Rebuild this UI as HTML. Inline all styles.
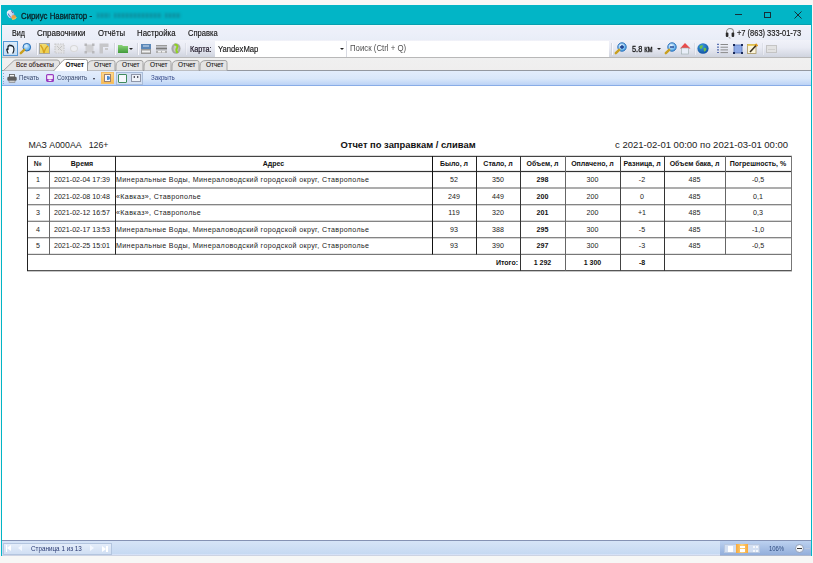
<!DOCTYPE html>
<html><head><meta charset="utf-8">
<style>
*{box-sizing:border-box;margin:0;padding:0}
html,body{width:813px;height:563px;overflow:hidden;background:#f7f7f6;font-family:"Liberation Sans",sans-serif;position:relative}
.a{position:absolute}
#win{position:absolute;left:1px;top:5px;width:811px;height:551px;background:#02b5c6;}
#menu{position:absolute;left:2px;top:25px;width:809px;height:15px;background:linear-gradient(#f4fafc 0,#eef0f9 12%,#eceff9 60%,#e9edf7 100%);}
#tb{position:absolute;left:2px;top:40px;width:809px;height:17px;background:linear-gradient(#f1f2f9,#e9ebf4 45%,#d0d4df);}
#tabs{position:absolute;left:2px;top:57px;width:809px;height:14px;background:linear-gradient(#f0f0f0,#efeeee);border-top:1px solid #b8b8b8;border-bottom:1px solid #9498a0}
#tb2{position:absolute;left:2px;top:71px;width:809px;height:15px;background:linear-gradient(#e3edfc 0%,#d9e7fa 55%,#bcd3f6 100%);border-bottom:1px solid #88ace6}
#content{position:absolute;left:2px;top:86px;width:809px;height:454px;background:#fff;}
#status{position:absolute;left:2px;top:540px;width:809px;height:16px;background:linear-gradient(#d6e4f7,#c6d9f2 85%,#dce5fa 92%,#c2c6d2 100%);border-top:1px solid #8592b4}
.t{position:absolute;white-space:nowrap;line-height:1;color:#1e1e1e}
.m{font-size:8.6px;top:28.9px;color:#151515;-webkit-text-stroke:0.15px #151515;transform-origin:0 0}
.sep{position:absolute;top:43px;width:2px;height:12px;background:#d2d5de;border-right:1px solid #f8f8fc}
.tab{position:absolute;top:58px;height:12px}
.tabtxt{position:absolute;top:61.8px;font-size:6.4px;color:#1a1a1a;-webkit-text-stroke:0.12px #1a1a1a;white-space:nowrap;line-height:1}
.tbl{position:absolute;left:27px;top:156px;width:765px;height:115px}
.hl{position:absolute;height:1px;background:#3a3a3a}
.vl{position:absolute;width:1px;background:#111}
.c{position:absolute;font-size:7.1px;line-height:1;white-space:nowrap;color:#222;text-align:center}
.h{font-weight:bold;font-size:7px;color:#111}
.b{font-weight:bold;color:#111}
</style></head><body>
<div id="win"></div>
<!-- title -->
<svg class="a" style="left:6px;top:9px" width="12" height="12" viewBox="0 0 12 12"><defs><linearGradient id="ti" x1="0" y1="0" x2="1" y2="1"><stop offset="0" stop-color="#ffffff"/><stop offset="0.6" stop-color="#c8d8f0"/><stop offset="1" stop-color="#6a8ad0"/></linearGradient></defs><ellipse cx="4.6" cy="5" rx="3.4" ry="4.3" transform="rotate(-30 4.6 5)" fill="url(#ti)"/><path d="M2.2 4.5 Q3 7.5 5.2 8.5" stroke="#4a6ac8" stroke-width="1" fill="none"/><path d="M5 1.6 Q6.5 2.4 7 4" stroke="#2a4a90" stroke-width="0.9" fill="none"/><ellipse cx="7.8" cy="8.2" rx="2.4" ry="2.2" fill="#e8a048"/><path d="M6 10.3 Q8.5 10.5 10.5 8.5" stroke="#f3d25a" stroke-width="1" fill="none"/></svg>
<div class="t" style="left:20.6px;top:11.5px;font-size:8.5px;color:#0a2228;-webkit-text-stroke:0.3px #0a2228;transform:scaleX(0.92);transform-origin:0 0">Сириус Навигатор -</div>
<div class="a" style="left:96.5px;top:12.8px;width:13px;height:5.5px;background:repeating-linear-gradient(90deg,rgba(25,100,115,.45) 0,rgba(25,100,115,.45) 2.5px,rgba(25,100,115,.15) 2.5px,rgba(25,100,115,.15) 4px);filter:blur(0.9px)"></div>
<div class="a" style="left:113.5px;top:12.8px;width:48px;height:5.5px;background:repeating-linear-gradient(90deg,rgba(25,100,115,.45) 0,rgba(25,100,115,.45) 2.5px,rgba(25,100,115,.15) 2.5px,rgba(25,100,115,.15) 4px);filter:blur(0.9px)"></div>
<div class="a" style="left:165px;top:12.8px;width:16px;height:5.5px;background:repeating-linear-gradient(90deg,rgba(25,100,115,.45) 0,rgba(25,100,115,.45) 2.5px,rgba(25,100,115,.15) 2.5px,rgba(25,100,115,.15) 4px);filter:blur(0.9px)"></div>
<div class="a" style="left:735px;top:14px;width:7px;height:1px;background:#15303a"></div>
<div class="a" style="left:764px;top:12px;width:7px;height:6px;border:1px solid #15303a"></div>
<svg class="a" style="left:794px;top:11px" width="8" height="8" viewBox="0 0 8 8"><path d="M0.5 0.5L7.5 7.5M7.5 0.5L0.5 7.5" stroke="#15303a" stroke-width="1"/></svg>
<!-- menu -->
<div class="a" style="left:2px;top:24px;width:809px;height:1px;background:#079fae"></div>
<div id="menu"></div>
<div class="t m" style="left:11.9px;transform:scaleX(0.84)">Вид</div>
<div class="t m" style="left:36.8px;transform:scaleX(0.93)">Справочники</div>
<div class="t m" style="left:98px;transform:scaleX(0.9)">Отчёты</div>
<div class="t m" style="left:137px;transform:scaleX(0.91)">Настройка</div>
<div class="t m" style="left:188px;transform:scaleX(0.88)">Справка</div>
<svg class="a" style="left:725px;top:27px" width="10" height="12" viewBox="0 0 10 12"><path d="M1.5 6.5 V5 A3.5 3.5 0 0 1 8.5 5 V6.5" fill="none" stroke="#8a8a8a" stroke-width="1.1"/><rect x="0.8" y="5.5" width="2.6" height="4.5" rx="1" fill="#2a2a2a"/><rect x="6.6" y="5.5" width="2.6" height="4.5" rx="1" fill="#2a2a2a"/><path d="M4 10 Q4 11.5 5.5 11.2" stroke="#999" stroke-width="0.9" fill="none"/></svg>
<div class="t m" style="left:737px;font-size:8.3px;top:29.2px;transform:scaleX(0.9)">+7 (863) 333-01-73</div>
<!-- toolbar -->
<div id="tb"></div>
<div class="a" style="left:3px;top:41px;width:15px;height:15px;background:linear-gradient(#dcebf9,#c3dcf4);border:1px solid #5596d4"></div>
<svg class="a" style="left:6px;top:44px" width="9" height="10" viewBox="0 0 9 10"><path d="M2.2 9.5 Q1.2 7.5 0.8 5.8 Q0.6 4.8 1.6 5 L2 5.6 V2.4 Q2.3 1.6 3 2.2 V1.5 Q3.5 0.6 4.3 1.3 L4.6 1.8 Q5.3 1 6 1.8 V2.3 Q6.8 1.9 7.3 2.8 Q8.2 4.5 7.8 6.5 Q7.4 8.5 6.6 9.5" fill="#f2f7fc" stroke="#1a222c" stroke-width="1.2" stroke-linejoin="round"/></svg>
<svg class="a" style="left:19px;top:42px" width="13" height="13" viewBox="0 0 13 13"><defs><radialGradient id="lg" cx="0.4" cy="0.35" r="0.7"><stop offset="0" stop-color="#e8f6ff"/><stop offset="1" stop-color="#3c9be6"/></radialGradient></defs><circle cx="7.8" cy="5.2" r="3.8" fill="url(#lg)" stroke="#2a6fb8" stroke-width="1"/><path d="M5.2 7.8 L1.8 11.2" stroke="#c9a020" stroke-width="2.4" stroke-linecap="round"/></svg>
<div class="sep" style="left:36px"></div>
<svg class="a" style="left:39px;top:43px" width="11" height="11" viewBox="0 0 11 11"><defs><linearGradient id="yg" x1="0" y1="0" x2="1" y2="1"><stop offset="0" stop-color="#f3e27a"/><stop offset="1" stop-color="#e9c94a"/></linearGradient></defs><rect x="0.5" y="0.5" width="10" height="10" fill="url(#yg)" stroke="#a8a8a0" stroke-width="1"/><path d="M7 1 L10 1 L10 4 Z" fill="#7fb0e0"/><path d="M1.5 2 Q4 5 5 10 M9 3 Q6 5 5 10" stroke="#d6a21c" stroke-width="1.4" fill="none"/></svg>
<svg class="a" style="left:54px;top:43px" width="11" height="11" viewBox="0 0 11 11"><rect x="1" y="1" width="9" height="9" fill="#e2e2e4" stroke="#c8c8ca" stroke-width="1.2" stroke-dasharray="1.5 1"/><path d="M3 3 L8 8 M8 3 L4 7" stroke="#c4c4c4" stroke-width="1"/></svg>
<div class="a" style="left:70px;top:45px;width:8px;height:7px;border-radius:50%;border:1.2px solid #d8d8d8;background:#eeeff3"></div>
<svg class="a" style="left:84px;top:43px" width="11" height="11" viewBox="0 0 11 11"><rect x="1.5" y="1.5" width="8" height="8" fill="#cfcfd2"/><rect x="0.5" y="0.5" width="2.5" height="2.5" fill="#b8b8bb"/><rect x="8" y="0.5" width="2.5" height="2.5" fill="#b8b8bb"/><rect x="0.5" y="8" width="2.5" height="2.5" fill="#b8b8bb"/><rect x="8" y="8" width="2.5" height="2.5" fill="#b8b8bb"/></svg>
<svg class="a" style="left:99px;top:43px" width="10" height="11" viewBox="0 0 10 11"><path d="M0.5 0.5 H9.5 V4 H4 V10.5 H0.5 Z" fill="#c6c6c9"/><rect x="6" y="5" width="3" height="2" fill="#c8c8ca"/></svg>
<div class="sep" style="left:114px"></div>
<svg class="a" style="left:118px;top:44px" width="10" height="9" viewBox="0 0 10 9"><defs><linearGradient id="gf" x1="0" y1="0" x2="0" y2="1"><stop offset="0" stop-color="#8ed47a"/><stop offset="1" stop-color="#3f9a3a"/></linearGradient></defs><path d="M0 1 H4 L5 2 H10 V9 H0 Z" fill="url(#gf)"/></svg>
<div class="a" style="left:129px;top:48px;width:0;height:0;border-left:2px solid transparent;border-right:2px solid transparent;border-top:2.5px solid #222"></div>
<div class="sep" style="left:137px"></div>
<svg class="a" style="left:141px;top:44px" width="10" height="10" viewBox="0 0 10 10"><rect x="0" y="0" width="10" height="5" fill="#5b87b8"/><rect x="2" y="1.5" width="6" height="1" fill="#d8e6f4"/><rect x="0" y="5" width="10" height="5" fill="#9a9a9a"/><rect x="1" y="6.5" width="8" height="2" fill="#f0f0f0"/></svg>
<svg class="a" style="left:156px;top:45px" width="11" height="8" viewBox="0 0 11 8"><rect x="0" y="0" width="11" height="1.5" fill="#9a9a9a"/><rect x="0" y="2.5" width="11" height="2" fill="#7a7a7a"/><rect x="0" y="5.5" width="11" height="2.5" fill="#b0b0b0"/><rect x="2" y="6" width="3" height="1.5" fill="#eee"/><rect x="6" y="6" width="3" height="1.5" fill="#eee"/></svg>
<svg class="a" style="left:171px;top:43px" width="10" height="11" viewBox="0 0 10 11"><ellipse cx="5" cy="5.5" rx="4.6" ry="5.2" fill="#a6a6a6"/><ellipse cx="5" cy="5.5" rx="2.5" ry="3.5" fill="#c8c8c8"/><path d="M3.5 1.5 Q7.5 2 6 5 Q4.5 7 6.5 10" stroke="#8ed31f" stroke-width="2" fill="none"/></svg>
<div class="sep" style="left:185px;opacity:.5"></div>
<div class="t" style="left:189.6px;top:44.6px;font-size:8.5px;color:#201828;-webkit-text-stroke:0.2px #201828;transform:scaleX(0.86);transform-origin:0 0">Карта:</div>
<div class="a" style="left:215px;top:40.5px;width:131px;height:16.3px;background:#fff"></div>
<div class="t" style="left:217.8px;top:44.6px;font-size:8.5px;color:#161616;-webkit-text-stroke:0.15px #161616;transform:scaleX(0.9);transform-origin:0 0">YandexMap</div>
<div class="a" style="left:340px;top:48px;width:0;height:0;border-left:2px solid transparent;border-right:2px solid transparent;border-top:2px solid #222"></div>
<div class="a" style="left:346px;top:40.5px;width:263px;height:16.3px;background:#fff;border-left:1px solid #d8dae2"></div>
<div class="t" style="left:349.6px;top:44.2px;font-size:8.6px;color:#505050;transform:scaleX(0.91);transform-origin:0 0">Поиск (Ctrl + Q)</div>
<div class="sep" style="left:611px"></div>
<svg class="a" style="left:614px;top:42px" width="13" height="13" viewBox="0 0 13 13"><defs><radialGradient id="lz" cx="0.4" cy="0.35" r="0.7"><stop offset="0" stop-color="#e8f6ff"/><stop offset="1" stop-color="#3c9be6"/></radialGradient></defs><circle cx="8" cy="5" r="4.2" fill="url(#lz)" stroke="#2a6fb8" stroke-width="1"/><path d="M6 5 H10 M8 3 V7" stroke="#163a8a" stroke-width="1.3"/><path d="M5.2 7.8 L1.8 11.2" stroke="#c9a020" stroke-width="2.4" stroke-linecap="round"/></svg>
<div class="t" style="left:631.5px;top:44.8px;font-size:9px;color:#1a1a1a;-webkit-text-stroke:0.3px #1a1a1a;transform:scaleX(0.82);transform-origin:0 0">5.8 км</div>
<div class="a" style="left:657px;top:48px;width:0;height:0;border-left:2px solid transparent;border-right:2px solid transparent;border-top:2px solid #222"></div>
<svg class="a" style="left:664px;top:42px" width="13" height="13" viewBox="0 0 13 13"><defs><radialGradient id="lz2" cx="0.4" cy="0.35" r="0.7"><stop offset="0" stop-color="#e8f6ff"/><stop offset="1" stop-color="#3c9be6"/></radialGradient></defs><circle cx="8" cy="5" r="4.2" fill="url(#lz2)" stroke="#2a6fb8" stroke-width="1"/><path d="M6 5 H10" stroke="#163a8a" stroke-width="1.3"/><path d="M5.2 7.8 L1.8 11.2" stroke="#c9a020" stroke-width="2.4" stroke-linecap="round"/></svg>
<svg class="a" style="left:679px;top:42px" width="12" height="13" viewBox="0 0 12 13"><path d="M6 1 L11.5 6.5 H1 Z" fill="#e94c4c"/><rect x="2.5" y="6" width="7" height="6" fill="#e8eef8" stroke="#9aa" stroke-width="0.6"/></svg>
<div class="sep" style="left:694px;opacity:.6"></div>
<svg class="a" style="left:697px;top:43px" width="12" height="11" viewBox="0 0 12 11"><defs><radialGradient id="gl" cx="0.4" cy="0.3" r="0.8"><stop offset="0" stop-color="#3a9ae0"/><stop offset="1" stop-color="#0d4a9a"/></radialGradient></defs><ellipse cx="6" cy="5.5" rx="5.6" ry="5.3" fill="url(#gl)"/><path d="M2.5 3.5 Q4 1.5 6 2.5 Q5.5 5 4 6 Q2.5 5.5 2.5 3.5 Z M6.5 5 Q8.5 4 9.5 6 Q8.5 9 7 8.5 Z" fill="#6cc04a"/></svg>
<svg class="a" style="left:717px;top:43px" width="11" height="11" viewBox="0 0 11 11"><path d="M3.5 1.5H11M3.5 4.2H11M3.5 6.9H11M3.5 9.6H11" stroke="#8a8a8a" stroke-width="1"/><path d="M1 0.8V10.5" stroke="#2c4a9c" stroke-width="1.5" stroke-dasharray="1.2 1.5"/></svg>
<svg class="a" style="left:733px;top:44px" width="10" height="10" viewBox="0 0 10 10"><rect x="1" y="1" width="8" height="8" fill="#8eaae6" stroke="#5a78b8" stroke-width="0.8"/><rect x="0" y="0" width="2" height="2" fill="#1a2a5a"/><rect x="8" y="0" width="2" height="2" fill="#1a2a5a"/><rect x="0" y="8" width="2" height="2" fill="#1a2a5a"/><rect x="8" y="8" width="2" height="2" fill="#1a2a5a"/></svg>
<svg class="a" style="left:747px;top:43px" width="11" height="11" viewBox="0 0 11 11"><rect x="0.5" y="1.5" width="8.5" height="9" fill="#fbf5dc" stroke="#a89560" stroke-width="0.8"/><rect x="0.5" y="1.2" width="8.5" height="1.6" fill="#e5c54a"/><path d="M3 9 L9.5 2" stroke="#3a3020" stroke-width="1.6"/><path d="M8.5 1 L10.5 3" stroke="#e09a20" stroke-width="1.8"/></svg>
<div class="sep" style="left:762px;opacity:.5"></div>
<div class="a" style="left:766px;top:45px;width:11px;height:8px;background:#e2e2e2;border:1px solid #c4c4c4"></div>
<div class="a" style="left:768px;top:47px;width:7px;height:3px;border-bottom:1px solid #cfcfcf"></div>
<!-- tabs -->
<div id="tabs"></div>
<svg class="a" style="left:0;top:0" width="240" height="72" viewBox="0 0 240 72"><path d="M3.5 70.5 L13.5 61 Q14.5 60 16 60 L57 60 Q59 60 59.5 62 L60 70.5" fill="#e4e4e4" stroke="#a0a0a0" stroke-width="1"/><path d="M87.5 70.5 V66 Q87.5 60.5 93.5 60.5 H113 Q115 60.5 115 62.5 V70.5" fill="#e4e4e4" stroke="#a2a2a2" stroke-width="1"/><path d="M116 70.5 V66 Q116 60.5 122 60.5 H141 Q143 60.5 143 62.5 V70.5" fill="#e4e4e4" stroke="#a2a2a2" stroke-width="1"/><path d="M144 70.5 V66 Q144 60.5 150 60.5 H169 Q171 60.5 171 62.5 V70.5" fill="#e4e4e4" stroke="#a2a2a2" stroke-width="1"/><path d="M172 70.5 V66 Q172 60.5 178 60.5 H197 Q199 60.5 199 62.5 V70.5" fill="#e4e4e4" stroke="#a2a2a2" stroke-width="1"/><path d="M200 70.5 V66 Q200 60.5 206 60.5 H225 Q227 60.5 227 62.5 V70.5" fill="#e4e4e4" stroke="#a2a2a2" stroke-width="1"/><path d="M53.5 71 L63 60.5 Q64 59.5 65.5 59.5 L85.5 59.5 Q87.5 59.5 87.5 61.5 L87.5 71" fill="#fff" stroke="#999" stroke-width="1"/></svg>
<div class="tabtxt" style="left:16px;color:#3a2020">Все объекты</div>
<div class="tabtxt" style="left:65.5px;font-weight:bold;color:#111;top:62.1px">Отчет</div>
<div class="tabtxt" style="left:94px">Отчет</div>
<div class="tabtxt" style="left:122px">Отчет</div>
<div class="tabtxt" style="left:150px">Отчет</div>
<div class="tabtxt" style="left:178px">Отчет</div>
<div class="tabtxt" style="left:206px">Отчет</div>
<!-- toolbar 2 -->
<div id="tb2"></div>
<div class="a" style="left:3px;top:73px;width:1px;height:11px;background:repeating-linear-gradient(#8da2c6 0,#8da2c6 1px,transparent 1px,transparent 2.5px)"></div>
<svg class="a" style="left:7px;top:74px" width="10" height="9" viewBox="0 0 10 9"><rect x="2.5" y="0.5" width="5" height="2.5" fill="#f4f4f4" stroke="#555" stroke-width="0.8"/><rect x="0.3" y="2.8" width="9.4" height="4" rx="1.2" fill="#5e5e5e"/><rect x="2" y="6.5" width="6" height="2" fill="#cfcfcf" stroke="#666" stroke-width="0.5"/></svg>
<div class="t" style="left:18.8px;top:75.1px;font-size:6.8px;color:#34446a;transform:scaleX(0.9);transform-origin:0 0">Печать</div>
<svg class="a" style="left:46px;top:74px" width="8" height="8" viewBox="0 0 8 8"><rect x="0.6" y="0.6" width="6.8" height="6.8" rx="1" fill="#f4eefa" stroke="#9a3cc0" stroke-width="1.2"/><rect x="1" y="5" width="6" height="2.4" fill="#9a3cc0"/><rect x="2.5" y="5.6" width="3" height="1.3" fill="#fff"/></svg>
<div class="t" style="left:57.2px;top:75.1px;font-size:6.8px;color:#34446a;transform:scaleX(0.89);transform-origin:0 0">Сохранить</div>
<div class="a" style="left:93px;top:77.5px;width:0;height:0;border-left:1.5px solid transparent;border-right:1.5px solid transparent;border-top:2px solid #223"></div>
<div class="a" style="left:101px;top:72px;width:13px;height:12px;background:linear-gradient(#fcd890,#f7bb55);border:1px solid #f5c068"></div>
<div class="a" style="left:104px;top:74px;width:7px;height:8px;background:#f8f8fb;border:1px solid #9a8070"></div>
<div class="a" style="left:107px;top:76px;width:3px;height:4px;background:#4a8ad0;border-radius:0 2px 2px 0"></div>
<div class="a" style="left:116px;top:72px;width:27px;height:13px;background:#d3e0f3;border:1px solid #a9bcd9"></div>
<div class="a" style="left:118px;top:74px;width:9px;height:9px;background:#f4f7fb;border:1px solid #3f8a5c;border-radius:1px"></div>
<div class="a" style="left:131px;top:74px;width:10px;height:8px;background:#eef2f8;border:1px solid #8f96a8"></div>
<div class="a" style="left:133px;top:76px;width:0;height:0;border-top:1.5px solid transparent;border-bottom:1.5px solid transparent;border-right:2px solid #223"></div>
<div class="a" style="left:137px;top:76px;width:0;height:0;border-top:1.5px solid transparent;border-bottom:1.5px solid transparent;border-left:2px solid #223"></div>
<div class="t" style="left:151px;top:75.1px;font-size:6.8px;color:#34488a;transform:scaleX(0.91);transform-origin:0 0">Закрыть</div>
<!-- content -->
<div id="content"></div>
<div class="t" style="left:28.5px;top:140.8px;font-size:8.8px;color:#222">МАЗ А000АА<span style="margin-left:7px">126+</span></div>
<div class="t" style="left:340.5px;top:140px;font-size:9.4px;font-weight:bold;color:#111">Отчет по заправкам / сливам</div>
<div class="t" style="left:615px;top:140px;font-size:9.5px;color:#222">с 2021-02-01 00:00 по 2021-03-01 00:00</div>
<div id="grid"><svg class="a" style="left:0;top:0" width="813" height="300" viewBox="0 0 813 300"><rect x="27" y="155.80" width="765" height="1.2" fill="#444"/><rect x="27" y="170.90" width="765" height="1.2" fill="#333"/><rect x="27" y="187.40" width="765" height="1.2" fill="#777"/><rect x="27" y="204.10" width="765" height="1.2" fill="#777"/><rect x="27" y="220.70" width="765" height="1.2" fill="#777"/><rect x="27" y="237.10" width="765" height="1.2" fill="#777"/><rect x="27" y="253.80" width="765" height="1.2" fill="#777"/><rect x="27" y="270.10" width="765" height="1.2" fill="#444"/><rect x="27" y="156" width="1" height="115.0" fill="#222"/><rect x="49" y="156" width="1" height="98.4" fill="#666"/><rect x="115" y="156" width="1" height="98.4" fill="#222"/><rect x="432" y="156" width="1" height="98.4" fill="#111"/><rect x="476" y="156" width="1" height="98.4" fill="#222"/><rect x="520" y="156" width="1" height="115.0" fill="#333"/><rect x="565" y="156" width="1" height="115.0" fill="#666"/><rect x="620" y="156" width="1" height="115.0" fill="#444"/><rect x="664" y="156" width="1" height="115.0" fill="#333"/><rect x="725" y="156" width="1" height="98.4" fill="#666"/><rect x="791" y="156" width="1" height="115.0" fill="#777"/></svg>
<div class="c h" style="left:27px;top:155.9px;width:22px;line-height:16px;">№</div>
<div class="c h" style="left:49px;top:155.9px;width:66px;line-height:16px;">Время</div>
<div class="c h" style="left:115px;top:155.9px;width:317px;line-height:16px;">Адрес</div>
<div class="c h" style="left:432px;top:155.9px;width:44px;line-height:16px;">Было, л</div>
<div class="c h" style="left:476px;top:155.9px;width:44px;line-height:16px;">Стало, л</div>
<div class="c h" style="left:520px;top:155.9px;width:45px;line-height:16px;">Объем, л</div>
<div class="c h" style="left:565px;top:155.9px;width:55px;line-height:16px;">Оплачено, л</div>
<div class="c h" style="left:620px;top:155.9px;width:44px;line-height:16px;">Разница, л</div>
<div class="c h" style="left:664px;top:155.9px;width:61px;line-height:16px;">Объем бака, л</div>
<div class="c h" style="left:725px;top:155.9px;width:66px;line-height:16px;">Погрешность, %</div>
<div class="c " style="left:27px;top:172.1px;width:22px;line-height:16px;">1</div>
<div class="c " style="left:49px;top:172.1px;width:66px;line-height:16px;">2021-02-04 17:39</div>
<div class="c " style="left:116px;top:172.1px;width:317px;text-align:left;line-height:16px;letter-spacing:0.37px">Минеральные Воды, Минераловодский городской округ, Ставрополье</div>
<div class="c " style="left:432px;top:172.1px;width:44px;line-height:16px;">52</div>
<div class="c " style="left:476px;top:172.1px;width:44px;line-height:16px;">350</div>
<div class="c b" style="left:520px;top:172.1px;width:45px;line-height:16px;">298</div>
<div class="c " style="left:565px;top:172.1px;width:55px;line-height:16px;">300</div>
<div class="c " style="left:620px;top:172.1px;width:44px;line-height:16px;">-2</div>
<div class="c " style="left:664px;top:172.1px;width:61px;line-height:16px;">485</div>
<div class="c " style="left:725px;top:172.1px;width:66px;line-height:16px;">-0,5</div>
<div class="c " style="left:27px;top:188.6px;width:22px;line-height:16px;">2</div>
<div class="c " style="left:49px;top:188.6px;width:66px;line-height:16px;">2021-02-08 10:48</div>
<div class="c " style="left:116px;top:188.6px;width:317px;text-align:left;line-height:16px;letter-spacing:0.37px">«Кавказ», Ставрополье</div>
<div class="c " style="left:432px;top:188.6px;width:44px;line-height:16px;">249</div>
<div class="c " style="left:476px;top:188.6px;width:44px;line-height:16px;">449</div>
<div class="c b" style="left:520px;top:188.6px;width:45px;line-height:16px;">200</div>
<div class="c " style="left:565px;top:188.6px;width:55px;line-height:16px;">200</div>
<div class="c " style="left:620px;top:188.6px;width:44px;line-height:16px;">0</div>
<div class="c " style="left:664px;top:188.6px;width:61px;line-height:16px;">485</div>
<div class="c " style="left:725px;top:188.6px;width:66px;line-height:16px;">0,1</div>
<div class="c " style="left:27px;top:205.3px;width:22px;line-height:16px;">3</div>
<div class="c " style="left:49px;top:205.3px;width:66px;line-height:16px;">2021-02-12 16:57</div>
<div class="c " style="left:116px;top:205.3px;width:317px;text-align:left;line-height:16px;letter-spacing:0.37px">«Кавказ», Ставрополье</div>
<div class="c " style="left:432px;top:205.3px;width:44px;line-height:16px;">119</div>
<div class="c " style="left:476px;top:205.3px;width:44px;line-height:16px;">320</div>
<div class="c b" style="left:520px;top:205.3px;width:45px;line-height:16px;">201</div>
<div class="c " style="left:565px;top:205.3px;width:55px;line-height:16px;">200</div>
<div class="c " style="left:620px;top:205.3px;width:44px;line-height:16px;">+1</div>
<div class="c " style="left:664px;top:205.3px;width:61px;line-height:16px;">485</div>
<div class="c " style="left:725px;top:205.3px;width:66px;line-height:16px;">0,3</div>
<div class="c " style="left:27px;top:221.9px;width:22px;line-height:16px;">4</div>
<div class="c " style="left:49px;top:221.9px;width:66px;line-height:16px;">2021-02-17 13:53</div>
<div class="c " style="left:116px;top:221.9px;width:317px;text-align:left;line-height:16px;letter-spacing:0.37px">Минеральные Воды, Минераловодский городской округ, Ставрополье</div>
<div class="c " style="left:432px;top:221.9px;width:44px;line-height:16px;">93</div>
<div class="c " style="left:476px;top:221.9px;width:44px;line-height:16px;">388</div>
<div class="c b" style="left:520px;top:221.9px;width:45px;line-height:16px;">295</div>
<div class="c " style="left:565px;top:221.9px;width:55px;line-height:16px;">300</div>
<div class="c " style="left:620px;top:221.9px;width:44px;line-height:16px;">-5</div>
<div class="c " style="left:664px;top:221.9px;width:61px;line-height:16px;">485</div>
<div class="c " style="left:725px;top:221.9px;width:66px;line-height:16px;">-1,0</div>
<div class="c " style="left:27px;top:238.3px;width:22px;line-height:16px;">5</div>
<div class="c " style="left:49px;top:238.3px;width:66px;line-height:16px;">2021-02-25 15:01</div>
<div class="c " style="left:116px;top:238.3px;width:317px;text-align:left;line-height:16px;letter-spacing:0.37px">Минеральные Воды, Минераловодский городской округ, Ставрополье</div>
<div class="c " style="left:432px;top:238.3px;width:44px;line-height:16px;">93</div>
<div class="c " style="left:476px;top:238.3px;width:44px;line-height:16px;">390</div>
<div class="c b" style="left:520px;top:238.3px;width:45px;line-height:16px;">297</div>
<div class="c " style="left:565px;top:238.3px;width:55px;line-height:16px;">300</div>
<div class="c " style="left:620px;top:238.3px;width:44px;line-height:16px;">-3</div>
<div class="c " style="left:664px;top:238.3px;width:61px;line-height:16px;">485</div>
<div class="c " style="left:725px;top:238.3px;width:66px;line-height:16px;">-0,5</div>
<div class="c h" style="left:27px;top:255.0px;width:491px;text-align:right;line-height:16px;">Итого:</div>
<div class="c h" style="left:520px;top:255.0px;width:45px;line-height:16px;">1 292</div>
<div class="c h" style="left:565px;top:255.0px;width:55px;line-height:16px;">1 300</div>
<div class="c h" style="left:620px;top:255.0px;width:44px;line-height:16px;">-8</div></div><!--/grid-->
<!-- status -->
<div id="status"></div>
<div class="a" style="left:3px;top:543px;width:109px;height:12px;background:linear-gradient(#e4edfa,#d0def3);border:1px solid #b3c5df"></div>
<div class="t" style="left:31px;top:545.2px;font-size:7.8px;color:#2a3a72;transform:scaleX(0.81);transform-origin:0 0">Страница 1 из 13</div>
<div class="a" style="left:6px;top:545px;width:1px;height:7px;background:#fff"></div>
<div class="a" style="left:7px;top:545px;width:0;height:0;border-top:3.5px solid transparent;border-bottom:3.5px solid transparent;border-right:4px solid #fff"></div>
<div class="a" style="left:18px;top:545px;width:0;height:0;border-top:3.5px solid transparent;border-bottom:3.5px solid transparent;border-right:4px solid #f4f8ff"></div>
<div class="a" style="left:90px;top:545px;width:0;height:0;border-top:3.5px solid transparent;border-bottom:3.5px solid transparent;border-left:4px solid #f4f8ff"></div>
<div class="a" style="left:102px;top:545.5px;width:0;height:0;border-top:3px solid transparent;border-bottom:3px solid transparent;border-left:4px solid #fff"></div>
<div class="a" style="left:106px;top:545.5px;width:1.5px;height:6px;background:#fff"></div>
<div class="a" style="left:720px;top:541px;width:91px;height:14px;background:linear-gradient(#bcd1f0,#93aedb)"></div>
<div class="a" style="left:720px;top:555px;width:91px;height:1px;background:#aeb8cc"></div>
<div class="a" style="left:724px;top:543.5px;width:36px;height:9.5px;background:#d3dff2;border:1px solid #b9c8e0"></div>
<div class="a" style="left:727.5px;top:545.5px;width:5px;height:6.5px;background:#fff"></div>
<div class="a" style="left:736px;top:543.5px;width:12px;height:9.5px;background:linear-gradient(90deg,#f8a83a,#fcd27a 50%,#f8a83a)"></div>
<div class="a" style="left:739.5px;top:545.5px;width:5px;height:2.5px;background:#fff"></div>
<div class="a" style="left:739.5px;top:549px;width:5px;height:2.5px;background:#fff"></div>
<div class="a" style="left:752.5px;top:545.5px;width:2px;height:2px;background:#f4f7fc"></div>
<div class="a" style="left:756px;top:545.5px;width:2px;height:2px;background:#f4f7fc"></div>
<div class="a" style="left:752.5px;top:549.5px;width:2px;height:2px;background:#f4f7fc"></div>
<div class="a" style="left:756px;top:549.5px;width:2px;height:2px;background:#f4f7fc"></div>
<div class="t" style="left:769.3px;top:544.6px;font-size:7.4px;color:#2f4c80;transform:scaleX(0.8);transform-origin:0 0">106%</div>
<div class="a" style="left:795px;top:544px;width:9px;height:9px;border-radius:50%;background:radial-gradient(circle at 40% 35%,#ffffff,#dfe6f2);border:1px solid #9aa6bc"></div>
<div class="a" style="left:797px;top:548px;width:5px;height:1.3px;background:#3a3a3a"></div><div class="a" style="left:805px;top:548px;width:5px;height:1px;background:#b8c8e2"></div>
</body></html>
